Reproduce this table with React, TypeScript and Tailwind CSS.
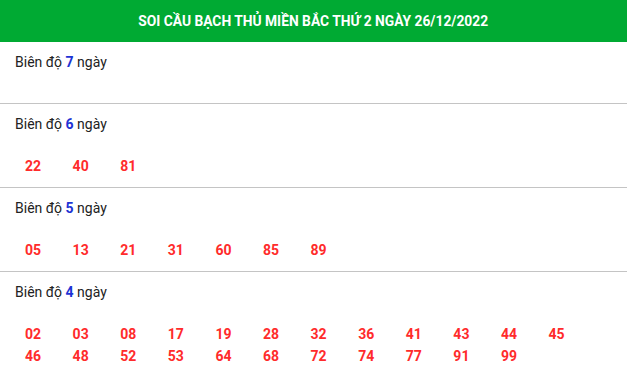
const groups: { days: number; nums: string[] }[] = [
  { days: 7, nums: [] },
  { days: 6, nums: ["22", "40", "81"] },
  { days: 5, nums: ["05", "13", "21", "31", "60", "85", "89"] },
  {
    days: 4,
    nums: [
      "02", "03", "08", "17", "19", "28", "32", "36", "41", "43", "44", "45",
      "46", "48", "52", "53", "64", "68", "72", "74", "77", "91", "99",
    ],
  },
];

export default function App() {
  return (
    <div className="w-[627px] bg-white font-['Roboto','Liberation_Sans',sans-serif]">
      <div className="h-[42px] bg-[#00aa33] flex items-center justify-center">
        <span className="inline-block scale-x-[0.92] text-[15px] font-bold text-white whitespace-nowrap">
          SOI CẦU BẠCH THỦ MIỀN BẮC THỨ 2 NGÀY 26/12/2022
        </span>
      </div>
      {groups.map((g, i) => (
        <div
          key={g.days}
          className={
            "pt-[10px] pb-[10px] px-[15px] " +
            (i < groups.length - 1 ? "border-b border-[#c4c4c4]" : "")
          }
        >
          <div className="text-[14px] leading-[20px] text-[#222]">
            Biên độ <span className="font-bold text-[#1d33d4]">{g.days}</span> ngày
          </div>
          {g.nums.length > 0 ? (
            <div className="mt-[21px] flex flex-wrap">
              {g.nums.map((n) => (
                <div
                  key={n}
                  className="w-[47.6px] pl-[10px] text-[14px] leading-[22px] font-bold text-[#ff2b2b]"
                >
                  {n}
                </div>
              ))}
            </div>
          ) : (
            <div className="h-[21px]" />
          )}
        </div>
      ))}
    </div>
  );
}
